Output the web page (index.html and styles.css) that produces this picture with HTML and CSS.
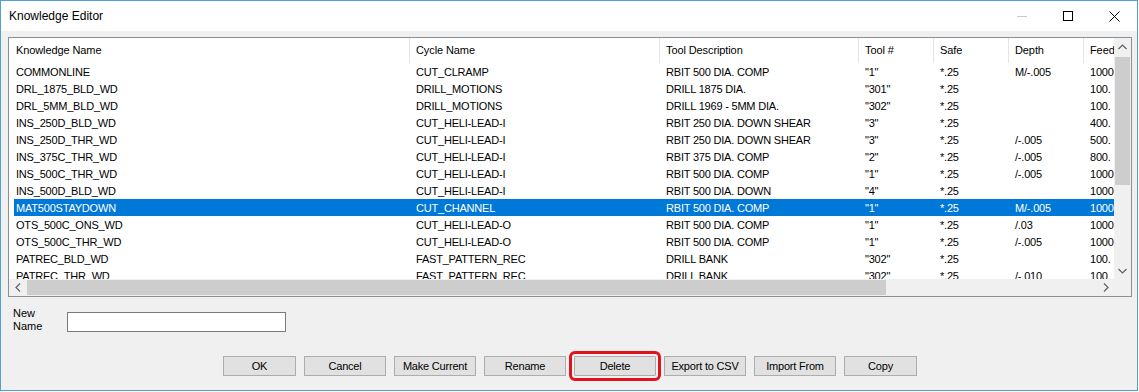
FILE: index.html
```html
<!DOCTYPE html>
<html lang="en">
<head>
    <meta charset="UTF-8">
    <title>Knowledge Editor</title>
    <link rel="stylesheet" href="styles.css">
</head>
<body>
    <div id="window">
        <div id="titlebar">
            <span class="title">Knowledge Editor</span>
            <div class="controls">
                <span class="ctl" id="min"><svg width="10" height="10" viewBox="0 0 10 10"><line x1="0" y1="5.5" x2="10" y2="5.5" stroke="#c8c8c8" stroke-width="1"/></svg></span>
                <span class="ctl" id="max"><svg width="10" height="10" viewBox="0 0 10 10"><rect x="0.5" y="0.5" width="9" height="9" fill="none" stroke="#000" stroke-width="1"/></svg></span>
                <span class="ctl" id="close"><svg width="11" height="11" viewBox="0 0 11 11"><path d="M0.5 0.5 L10.5 10.5 M10.5 0.5 L0.5 10.5" stroke="#000" stroke-width="1"/></svg></span>
            </div>
        </div>

        <div id="client">
            <div id="listview">
                <div class="viewport">
                    <div class="row head">
                        <span>Knowledge Name</span><span>Cycle Name</span><span>Tool Description</span><span>Tool #</span><span>Safe</span><span>Depth</span><span>Feed</span>
                    </div>
                    <div class="row"><span>COMMONLINE</span><span>CUT_CLRAMP</span><span>RBIT 500 DIA. COMP</span><span>"1"</span><span>*.25</span><span>M/-.005</span><span>1000</span></div>
                    <div class="row"><span>DRL_1875_BLD_WD</span><span>DRILL_MOTIONS</span><span>DRILL 1875 DIA.</span><span>"301"</span><span>*.25</span><span></span><span>100.</span></div>
                    <div class="row"><span>DRL_5MM_BLD_WD</span><span>DRILL_MOTIONS</span><span>DRILL 1969 - 5MM DIA.</span><span>"302"</span><span>*.25</span><span></span><span>100.</span></div>
                    <div class="row"><span>INS_250D_BLD_WD</span><span>CUT_HELI-LEAD-I</span><span>RBIT 250 DIA. DOWN SHEAR</span><span>"3"</span><span>*.25</span><span></span><span>400.</span></div>
                    <div class="row"><span>INS_250D_THR_WD</span><span>CUT_HELI-LEAD-I</span><span>RBIT 250 DIA. DOWN SHEAR</span><span>"3"</span><span>*.25</span><span>/-.005</span><span>500.</span></div>
                    <div class="row"><span>INS_375C_THR_WD</span><span>CUT_HELI-LEAD-I</span><span>RBIT 375 DIA. COMP</span><span>"2"</span><span>*.25</span><span>/-.005</span><span>800.</span></div>
                    <div class="row"><span>INS_500C_THR_WD</span><span>CUT_HELI-LEAD-I</span><span>RBIT 500 DIA. COMP</span><span>"1"</span><span>*.25</span><span>/-.005</span><span>1000</span></div>
                    <div class="row"><span>INS_500D_BLD_WD</span><span>CUT_HELI-LEAD-I</span><span>RBIT 500 DIA. DOWN</span><span>"4"</span><span>*.25</span><span></span><span>1000</span></div>
                    <div class="row selected"><span>MAT500STAYDOWN</span><span>CUT_CHANNEL</span><span>RBIT 500 DIA. COMP</span><span>"1"</span><span>*.25</span><span>M/-.005</span><span>1000</span></div>
                    <div class="row"><span>OTS_500C_ONS_WD</span><span>CUT_HELI-LEAD-O</span><span>RBIT 500 DIA. COMP</span><span>"1"</span><span>*.25</span><span>/.03</span><span>1000</span></div>
                    <div class="row"><span>OTS_500C_THR_WD</span><span>CUT_HELI-LEAD-O</span><span>RBIT 500 DIA. COMP</span><span>"1"</span><span>*.25</span><span>/-.005</span><span>1000</span></div>
                    <div class="row"><span>PATREC_BLD_WD</span><span>FAST_PATTERN_REC</span><span>DRILL BANK</span><span>"302"</span><span>*.25</span><span></span><span>100.</span></div>
                    <div class="row"><span>PATREC_THR_WD</span><span>FAST_PATTERN_REC</span><span>DRILL BANK</span><span>"302"</span><span>*.25</span><span>/-.010</span><span>100.</span></div>
                </div>

                <div class="vscroll">
                    <span class="arrow"><svg width="9" height="6" viewBox="0 0 9 6"><polyline points="0.5,5 4.5,1 8.5,5" fill="none" stroke="#606060" stroke-width="1.2"/></svg></span>
                    <div class="track"><div class="thumb"></div></div>
                    <span class="arrow"><svg width="9" height="6" viewBox="0 0 9 6"><polyline points="0.5,1 4.5,5 8.5,1" fill="none" stroke="#606060" stroke-width="1.2"/></svg></span>
                </div>

                <div class="hscroll">
                    <span class="arrow"><svg width="6" height="9" viewBox="0 0 6 9"><polyline points="5,0.5 1,4.5 5,8.5" fill="none" stroke="#606060" stroke-width="1.2"/></svg></span>
                    <div class="track"><div class="thumb"></div></div>
                    <span class="arrow"><svg width="6" height="9" viewBox="0 0 6 9"><polyline points="1,0.5 5,4.5 1,8.5" fill="none" stroke="#606060" stroke-width="1.2"/></svg></span>
                </div>

                <div class="corner"></div>
            </div>

            <div id="name-row">
                <label class="label" for="newName">New<br>Name</label>
                <input type="text" id="newName">
            </div>

            <div id="buttons">
                <button class="btn small">OK</button>
                <button class="btn">Cancel</button>
                <button class="btn">Make Current</button>
                <button class="btn">Rename</button>
                <button class="btn marked">Delete</button>
                <button class="btn">Export to CSV</button>
                <button class="btn">Import From</button>
                <button class="btn small">Copy</button>
            </div>
        </div>
    </div>
</body>
</html>
```

FILE: styles.css
```css
* {
    margin: 0;
    padding: 0;
    box-sizing: border-box;
}

body {
    background-color: #ffffff;
    font-family: "Liberation Sans", Arial, sans-serif;
    color: #000;
}

#window {
    width: 1138px;
    height: 391px;
    border: 1px solid #4ea0d6;
    display: flex;
    flex-direction: column;
    background-color: #f0f0f0;
}

#titlebar {
    height: 30px;
    flex: none;
    background-color: #ffffff;
    display: flex;
    align-items: center;
    padding-left: 8px;
}
.title {
    font-size: 12px;
    flex: 1;
}
.controls {
    display: flex;
    height: 30px;
}
.ctl {
    width: 46px;
    height: 30px;
    display: flex;
    align-items: center;
    justify-content: center;
}

#client {
    flex: 1;
    padding: 6px 5px 0 7px;
    font-size: 11px;
}

/* list view */
#listview {
    width: 1124px;
    height: 260px;
    border: 1px solid #8a8f98;
    background-color: #ffffff;
    display: grid;
    grid-template-columns: 1fr 17px;
    grid-template-rows: 1fr 17px;
}
.viewport {
    overflow: hidden;
}
.row {
    display: grid;
    grid-template-columns: 401px 250px 199px 75px 75px 75px 75px;
    height: 17px;
    line-height: 17px;
    white-space: nowrap;
    letter-spacing: -0.2px;
}
.row span {
    padding-left: 6px;
    padding-top: 1px;
    overflow: hidden;
}
.row span:first-child {
    padding-left: 7px;
}
.row.head {
    height: 25px;
    line-height: 25px;
    letter-spacing: -0.1px;
}
.row.head span {
    padding-top: 0;
    border-right: 1px solid #e5e5e5;
}
.row.selected {
    background: linear-gradient(to right, #ffffff 5px, #0078d7 5px);
    color: #ffffff;
}

/* scroll bars */
.vscroll, .hscroll {
    background-color: #f0f0f0;
    display: flex;
}
.vscroll {
    flex-direction: column;
}
.arrow {
    width: 17px;
    height: 17px;
    flex: none;
    display: flex;
    align-items: center;
    justify-content: center;
}
.track {
    flex: 1;
}
.vscroll .thumb {
    margin: 2px 1px 0 1px;
    height: 128px;
    background-color: #cdcdcd;
}
.hscroll .thumb {
    margin: 1px 0 0 1px;
    width: 859px;
    height: 15px;
    background-color: #cdcdcd;
}
.corner {
    background-color: #f0f0f0;
}

/* new name */
#name-row {
    display: flex;
    align-items: flex-end;
    margin-top: 10px;
    padding-left: 5px;
}
.label {
    width: 54px;
    line-height: 13px;
}
#newName {
    width: 219px;
    height: 20px;
    margin-bottom: 1px;
    border: 1px solid #7a7a7a;
    background-color: #ffffff;
}

/* buttons */
#buttons {
    display: flex;
    gap: 8px;
    margin-top: 23px;
    padding-left: 215px;
}
.btn {
    width: 82px;
    height: 20px;
    font-family: "Liberation Sans", Arial, sans-serif;
    font-size: 11px;
    letter-spacing: -0.2px;
    background-color: #e1e1e1;
    border: 1px solid #adadad;
    color: #000;
}
.btn.small {
    width: 73px;
}
.marked {
    outline: 3px solid #e0121b;
    outline-offset: 2px;
    border-radius: 1px;
}
```
